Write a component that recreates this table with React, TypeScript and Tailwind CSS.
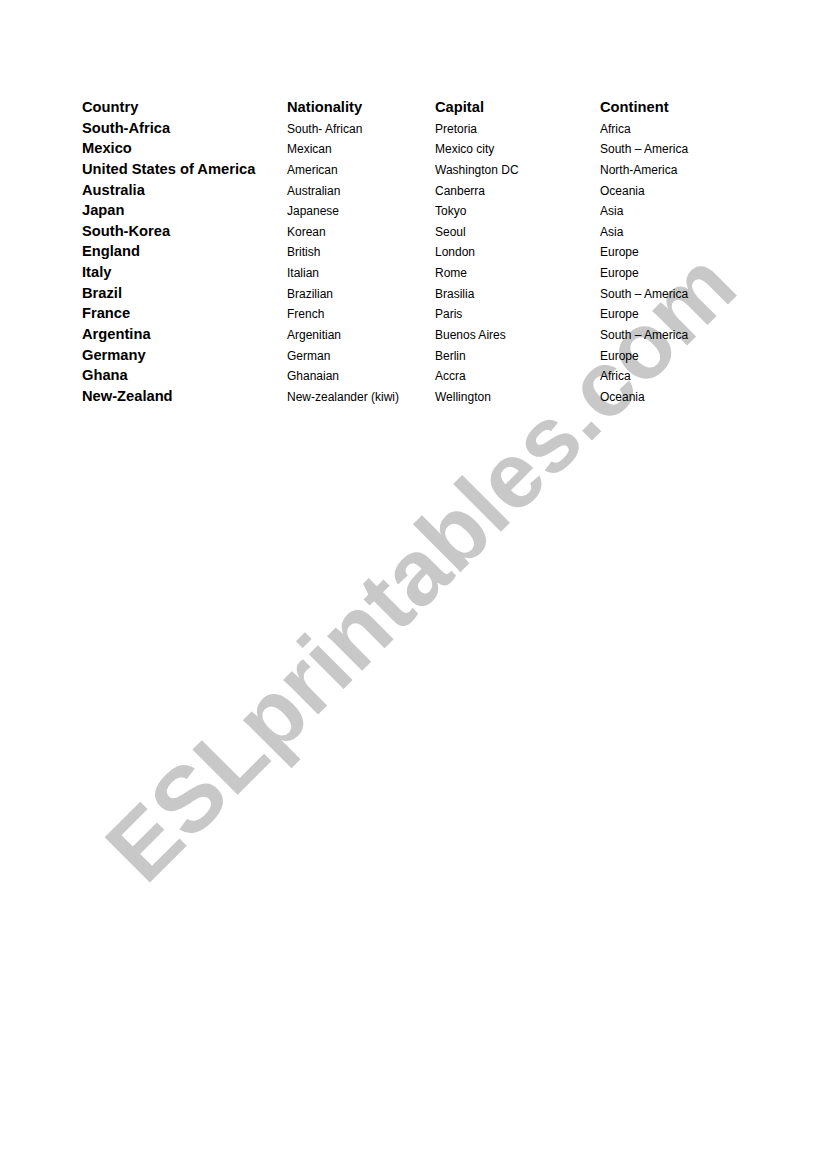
import React from "react";

const rows: [string, string, string, string][] = [
  ["South-Africa", "South- African", "Pretoria", "Africa"],
  ["Mexico", "Mexican", "Mexico city", "South – America"],
  ["United States of America", "American", "Washington DC", "North-America"],
  ["Australia", "Australian", "Canberra", "Oceania"],
  ["Japan", "Japanese", "Tokyo", "Asia"],
  ["South-Korea", "Korean", "Seoul", "Asia"],
  ["England", "British", "London", "Europe"],
  ["Italy", "Italian", "Rome", "Europe"],
  ["Brazil", "Brazilian", "Brasilia", "South – America"],
  ["France", "French", "Paris", "Europe"],
  ["Argentina", "Argenitian", "Buenos Aires", "South – America"],
  ["Germany", "German", "Berlin", "Europe"],
  ["Ghana", "Ghanaian", "Accra", "Africa"],
  ["New-Zealand", "New-zealander (kiwi)", "Wellington", "Oceania"],
];

export default function App() {
  return (
    <div
      className="relative w-[821px] h-[1169px] bg-white overflow-hidden text-black"
      style={{ fontFamily: '"Liberation Sans", Arial, sans-serif' }}
    >
      <div className="absolute left-[421px] top-[567px] -translate-x-1/2 -translate-y-1/2 -rotate-45 whitespace-nowrap text-[93px] leading-none font-bold text-[#c8c8c8] select-none">
        ESLprintables.com
      </div>

      <div className="relative pt-[97px] pl-[82px]">
        <div className="flex items-baseline h-[20.65px] text-[14.7px] font-bold">
          <div className="w-[205px] leading-[20.65px]">Country</div>
          <div className="w-[148px] leading-[16px]">Nationality</div>
          <div className="w-[165px] leading-[16px]">Capital</div>
          <div className="leading-[16px]">Continent</div>
        </div>
        {rows.map((r, i) => (
          <div key={i} className="flex items-baseline h-[20.65px]">
            <div className="w-[205px] text-[14.7px] font-bold leading-[20.65px]">{r[0]}</div>
            <div className="w-[148px] text-[12px] leading-[14px]">{r[1]}</div>
            <div className="w-[165px] text-[12px] leading-[14px]">{r[2]}</div>
            <div className="text-[12px] leading-[14px]">{r[3]}</div>
          </div>
        ))}
      </div>
    </div>
  );
}
